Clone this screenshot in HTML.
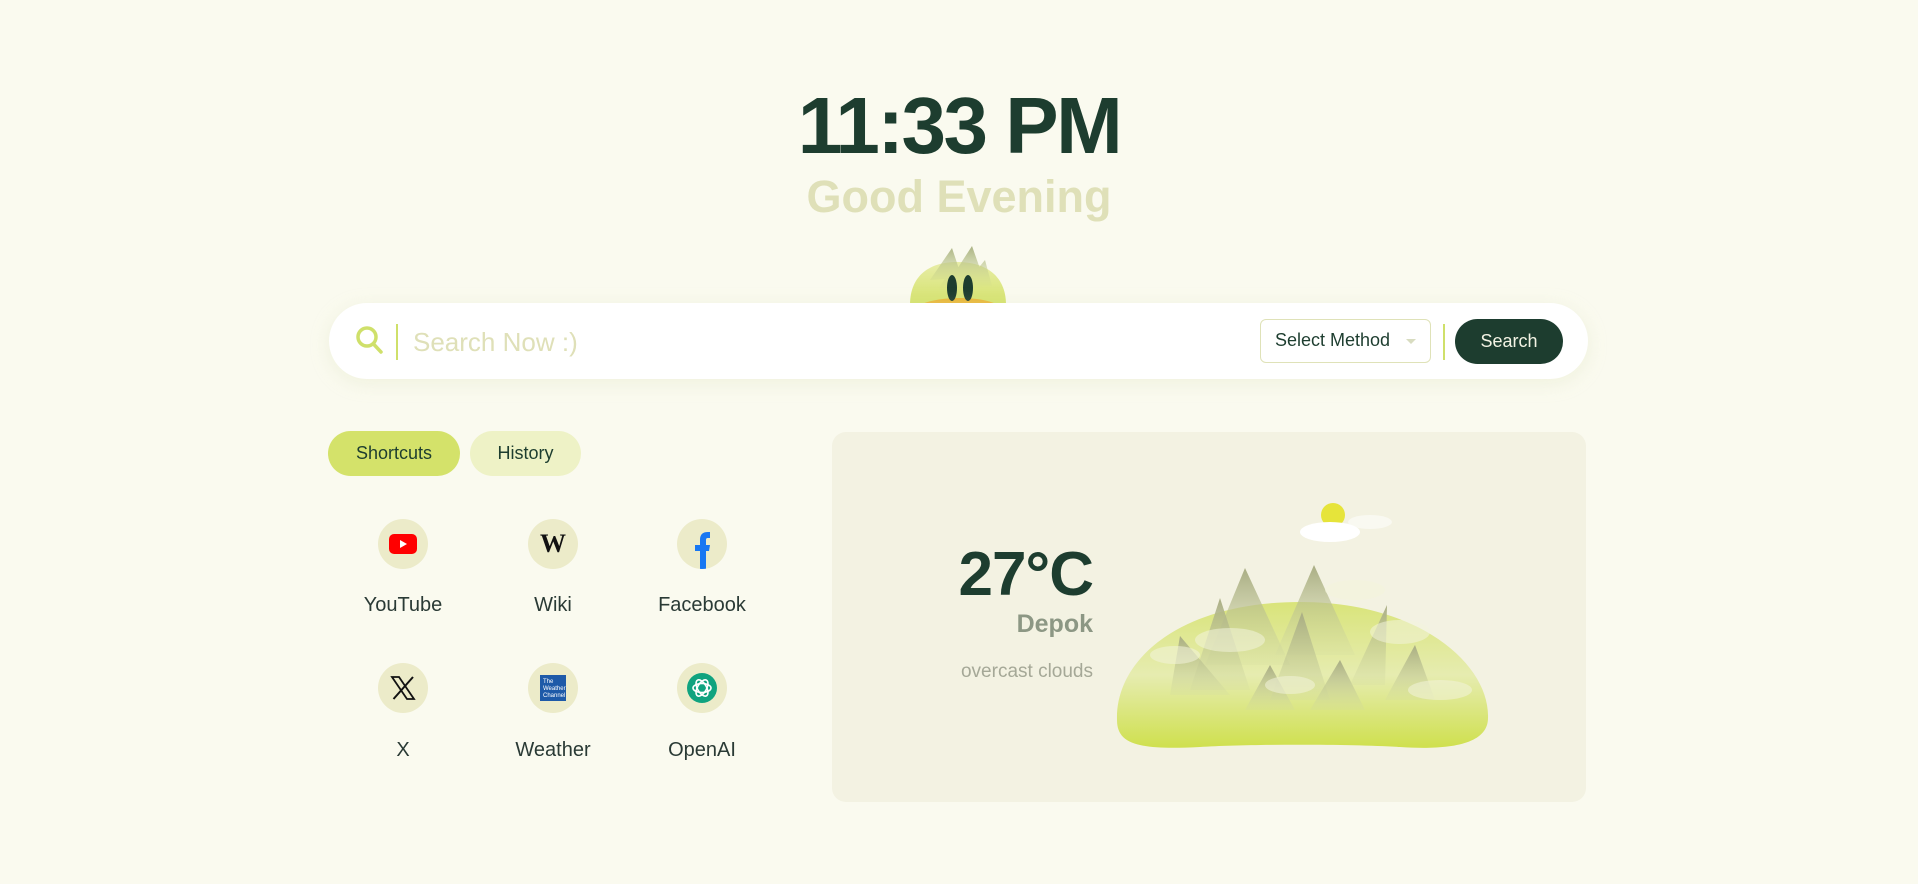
<!DOCTYPE html>
<html><head><meta charset="utf-8">
<style>
*{margin:0;padding:0;box-sizing:border-box}
html,body{width:1918px;height:884px;overflow:hidden;background:#fafaef;font-family:"Liberation Sans",sans-serif}
.abs{position:absolute}
#time{left:0;width:1918px;top:80px;text-align:center;font-size:80px;font-weight:700;color:#1d3d2f;letter-spacing:-2.5px;line-height:92px}
#greet{left:0;width:1918px;top:170px;text-align:center;font-size:45px;font-weight:700;color:#dfe0b8;line-height:54px}
#bar{left:329px;top:303px;width:1259px;height:76px;background:#fff;border-radius:38px;box-shadow:0 4px 18px rgba(220,225,190,.35)}
#ph{left:413px;top:326px;font-size:26px;color:#dfe0b8;line-height:32px}
#sel{left:1260px;top:319px;width:171px;height:44px;border:1.5px solid #dfe2b8;border-radius:6px;font-size:18px;color:#1d3d2f;line-height:41px;padding-left:14px}
#sel:after{content:"";position:absolute;right:14px;top:19px;border:5px solid transparent;border-top:5px solid #d8dcc0}
#div1,#div2{width:2px;height:36px;background:#cfe06a;top:324px}
#btn{left:1455px;top:319px;width:108px;height:45px;border-radius:23px;background:#1d3d2f;color:#f3f3e4;font-size:18px;text-align:center;line-height:45px}
.tab{top:431px;height:45px;border-radius:23px;font-size:18px;color:#1d3d2f;text-align:center;line-height:45px}
.ic{width:50px;height:50px;border-radius:50%;background:#ecebc9;display:flex;align-items:center;justify-content:center}
.lb{width:160px;text-align:center;font-size:20px;color:#2a3a35;line-height:24px}
#card{left:832px;top:432px;width:754px;height:370px;background:#f3f2e2;border-radius:14px}
#temp{left:900px;width:193px;top:540px;text-align:right;font-size:62px;font-weight:700;color:#1d3d2f;line-height:70px;letter-spacing:-1px}
#city{left:900px;width:193px;top:609px;text-align:right;font-size:25px;font-weight:700;color:#8c9784;line-height:30px}
#desc{left:850px;width:243px;top:660px;text-align:right;font-size:19px;color:#a5a897;line-height:24px}
</style></head><body>
<div id="time" class="abs">11:33 PM</div>
<div id="greet" class="abs">Good Evening</div>

<svg class="abs" style="left:900px;top:240px" width="120" height="70" viewBox="0 0 120 70">
<defs><linearGradient id="mg" x1="0" y1="0" x2="0" y2="1"><stop offset="0" stop-color="#e8eda8"/><stop offset="1" stop-color="#d4e26a"/></linearGradient>
<linearGradient id="mt" x1="0" y1="0" x2="0" y2="1"><stop offset="0" stop-color="#aab284"/><stop offset="1" stop-color="#c8d58a" stop-opacity="0"/></linearGradient></defs>
<path d="M10,65 C10,35 30,22 57,22 C85,22 106,35 106,65 Z" fill="url(#mg)"/>
<path d="M30,40 L52,8 L62,38 Z M50,40 L72,6 L84,40 Z M38,50 L55,22 L66,50 Z M62,48 L85,20 L92,46 Z" fill="url(#mt)"/>
<path d="M22,64 C40,56 80,56 96,64 Z" fill="#e9b83a"/>
<ellipse cx="52" cy="48" rx="5" ry="13" fill="#1d3d2f"/>
<ellipse cx="68" cy="48" rx="5" ry="13" fill="#1d3d2f"/>
</svg>

<div id="bar" class="abs"></div>
<svg class="abs" style="left:354px;top:324px" width="32" height="34" viewBox="0 0 32 34"><circle cx="13" cy="13" r="9" fill="none" stroke="#cfe06a" stroke-width="3.5"/><line x1="19.5" y1="20" x2="27" y2="28" stroke="#cfe06a" stroke-width="3.5" stroke-linecap="round"/></svg>
<div id="div1" class="abs" style="left:396px"></div>
<div id="ph" class="abs">Search Now :)</div>
<div id="sel" class="abs">Select Method</div>
<div id="div2" class="abs" style="left:1443px"></div>
<div id="btn" class="abs">Search</div>

<div class="abs tab" style="left:328px;width:132px;background:#d4e26a">Shortcuts</div>
<div class="abs tab" style="left:470px;width:111px;background:#eef2c6">History</div>

<div class="abs ic" style="left:378px;top:519px"><svg width="28" height="20" viewBox="0 0 28 20"><rect x="0" y="0" width="28" height="20" rx="5" fill="#f00"/><path d="M11,6 L18,10 L11,14 Z" fill="#fff"/></svg></div>
<div class="abs ic" style="left:528px;top:519px"><span style="font-family:'Liberation Serif',serif;font-weight:700;font-size:26px;color:#111">W</span></div>
<div class="abs ic" style="left:677px;top:519px;overflow:hidden"><svg width="50" height="50" viewBox="0 0 50 50"><path d="M23,50 L23,32 L18,32 L18,26 L23,26 L23,21 C23,15 26,13 31,13 L33,13 L33,19 L31,19 C29,19 29,20 29,22 L29,26 L33,26 L32,32 L29,32 L29,50 Z" fill="#1877f2"/></svg></div>
<div class="abs lb" style="left:323px;top:593px">YouTube</div>
<div class="abs lb" style="left:473px;top:593px">Wiki</div>
<div class="abs lb" style="left:622px;top:593px">Facebook</div>

<div class="abs ic" style="left:378px;top:663px"><svg width="26" height="26" viewBox="0 0 26 26"><path d="M2,2 L9,2 L24,24 L17,24 Z" fill="none" stroke="#111" stroke-width="1.8"/><path d="M23,2 L3.5,24" stroke="#111" stroke-width="2"/></svg></div>
<div class="abs ic" style="left:528px;top:663px"><svg width="26" height="26" viewBox="0 0 26 26"><rect width="26" height="26" fill="#1e5aa8"/><text x="3" y="8" font-size="6" fill="#fff" font-family="Liberation Sans">The</text><text x="3" y="15" font-size="6" fill="#fff" font-family="Liberation Sans">Weather</text><text x="3" y="22" font-size="6" fill="#fff" font-family="Liberation Sans">Channel</text></svg></div>
<div class="abs ic" style="left:677px;top:663px"><svg width="30" height="30" viewBox="0 0 30 30"><circle cx="15" cy="15" r="15" fill="#10a37f"/><g fill="none" stroke="#fff" stroke-width="1.6"><ellipse cx="15" cy="15" rx="9" ry="4.5"/><ellipse cx="15" cy="15" rx="9" ry="4.5" transform="rotate(60 15 15)"/><ellipse cx="15" cy="15" rx="9" ry="4.5" transform="rotate(120 15 15)"/></g></svg></div>
<div class="abs lb" style="left:323px;top:738px">X</div>
<div class="abs lb" style="left:473px;top:738px">Weather</div>
<div class="abs lb" style="left:622px;top:738px">OpenAI</div>

<div id="card" class="abs"></div>
<div id="temp" class="abs">27°C</div>
<div id="city" class="abs">Depok</div>
<div id="desc" class="abs">overcast clouds</div>

<svg class="abs" style="left:1100px;top:490px" width="400" height="270" viewBox="0 0 400 270">
<defs>
<linearGradient id="dg" x1="0" y1="0" x2="0" y2="1"><stop offset="0" stop-color="#d9e47a"/><stop offset=".5" stop-color="#e6ecb0"/><stop offset="1" stop-color="#cfe04e"/></linearGradient>
<linearGradient id="pk" x1="0" y1="0" x2="0" y2="1"><stop offset="0" stop-color="#a9ad84"/><stop offset="1" stop-color="#d0d8a0" stop-opacity="0.2"/></linearGradient>
</defs>
<path d="M17,230 C15,170 80,112 200,112 C320,112 390,175 388,228 C388,256 345,260 300,257 C250,254 150,254 100,257 C40,260 17,255 17,230Z" fill="url(#dg)"/>
<g fill="url(#pk)">
<path d="M145,78 L105,175 L190,175 Z"/>
<path d="M214,75 L175,165 L255,165 Z"/>
<path d="M120,108 L90,200 L150,200 Z"/>
<path d="M80,146 L70,205 L130,205 Z"/>
<path d="M202,122 L170,210 L230,210 Z"/>
<path d="M170,175 L145,220 L195,220 Z"/>
<path d="M240,170 L210,220 L265,220 Z"/>
<path d="M287,115 L250,195 L285,195 Z"/>
<path d="M315,155 L285,210 L335,210 Z"/>
</g>
<g fill="#f3f4dc" opacity=".55">
<ellipse cx="130" cy="150" rx="35" ry="12"/><ellipse cx="300" cy="142" rx="30" ry="12"/>
<ellipse cx="340" cy="200" rx="32" ry="10"/><ellipse cx="190" cy="195" rx="25" ry="9"/>
<ellipse cx="75" cy="165" rx="25" ry="9"/><ellipse cx="255" cy="100" rx="30" ry="10"/>
</g>
<circle cx="233" cy="25" r="12" fill="#e6e43a"/>
<ellipse cx="230" cy="42" rx="30" ry="10" fill="#fff"/>
<ellipse cx="270" cy="32" rx="22" ry="7" fill="#fff" opacity=".5"/>
</svg>
</body></html>
